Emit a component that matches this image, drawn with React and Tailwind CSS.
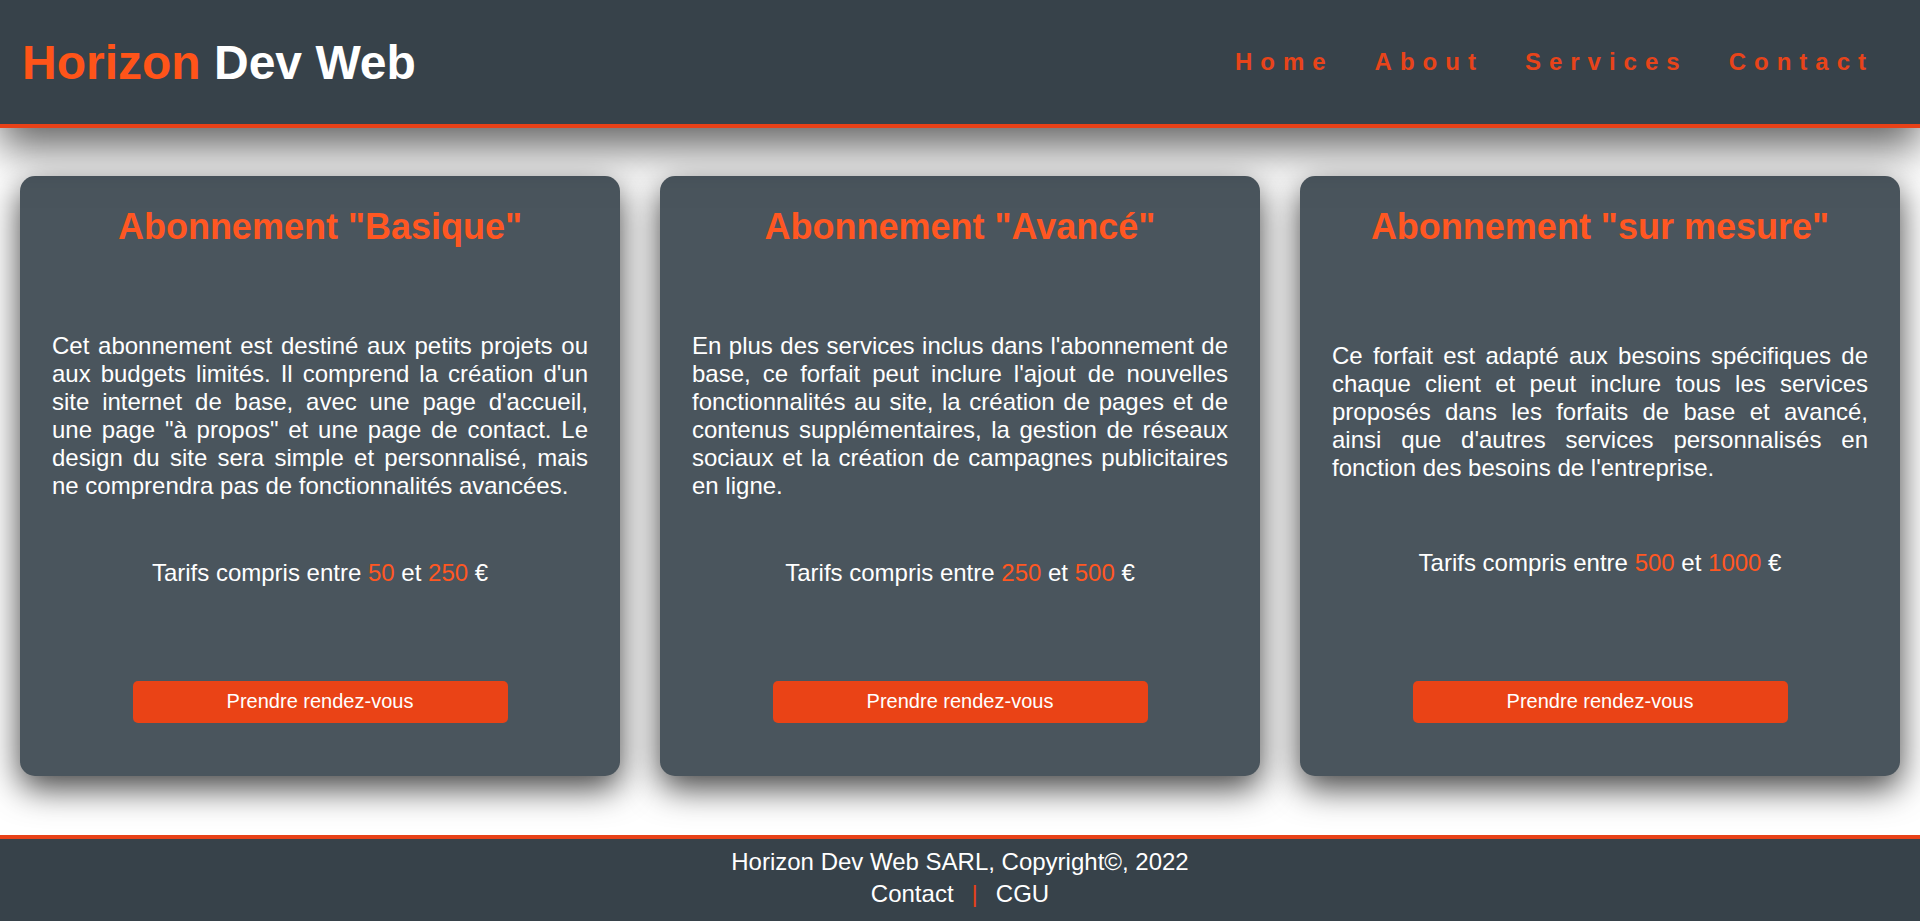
const offers = [
  {
    title: 'Abonnement "Basique"',
    text: "Cet abonnement est destiné aux petits projets ou aux budgets limités. Il comprend la création d'un site internet de base, avec une page d'accueil, une page \"à propos\" et une page de contact. Le design du site sera simple et personnalisé, mais ne comprendra pas de fonctionnalités avancées.",
    min: '50',
    max: '250',
  },
  {
    title: 'Abonnement "Avancé"',
    text: "En plus des services inclus dans l'abonnement de base, ce forfait peut inclure l'ajout de nouvelles fonctionnalités au site, la création de pages et de contenus supplémentaires, la gestion de réseaux sociaux et la création de campagnes publicitaires en ligne.",
    min: '250',
    max: '500',
  },
  {
    title: 'Abonnement "sur mesure"',
    text: "Ce forfait est adapté aux besoins spécifiques de chaque client et peut inclure tous les services proposés dans les forfaits de base et avancé, ainsi que d'autres services personnalisés en fonction des besoins de l'entreprise.",
    min: '500',
    max: '1000',
  },
];

const links = ['Home', 'About', 'Services', 'Contact'];

const OfferCard = ({ title, text, min, max }) => (
  <div className="flex h-[600px] w-[600px] flex-col justify-between rounded-[15px] bg-[#4a555d] px-[32px] pb-[53px] pt-[30px] text-white shadow-[0_12px_34px_rgba(0,0,0,0.75)]">
    <h2 className="mb-[26px] text-center text-[36px] font-bold leading-[normal] text-[#ff5722]">
      {title}
    </h2>
    <p className="text-justify text-[24px] leading-[normal]">{text}</p>
    <p className="mb-[36px] text-center text-[24px] leading-[normal]">
      Tarifs compris entre <span className="text-[#ff5722]">{min}</span> et{' '}
      <span className="text-[#ff5722]">{max}</span> €
    </p>
    <button className="mx-auto h-[42px] w-[375px] rounded-[5px] bg-[#ea4316] text-[20px] leading-[normal] text-white">
      Prendre rendez-vous
    </button>
  </div>
);

export default function App() {
  return (
    <div className="min-h-screen bg-white font-['Liberation_Sans',Arial,sans-serif]">
      {/* header */}
      <header className="relative z-10 flex h-[128px] items-center justify-between border-b-4 border-[#e84118] bg-[#37424a] pl-[22px] pr-[46px] shadow-[0_20px_40px_rgba(0,0,0,0.6)]">
        <h1 className="text-[48px] font-bold leading-[normal]">
          <span className="text-[#ff5419]">Horizon</span>{' '}
          <span className="text-white">Dev Web</span>
        </h1>
        <nav className="flex gap-[41px]">
          {links.map((l) => (
            <a key={l} href="#" className="text-[24px] font-bold leading-[normal] tracking-[8px] text-[#e8441a]">
              {l}
            </a>
          ))}
        </nav>
      </header>

      <main className="flex gap-[40px] px-[20px] pb-[59px] pt-[48px]">
        {offers.map((o) => (
          <OfferCard key={o.title} {...o} />
        ))}
      </main>

      <footer className="border-t-4 border-[#e84118] bg-[#37424a] pb-[13px] pt-[9px] text-center text-[24px] leading-[normal] text-white">
        <p>Horizon Dev Web SARL, Copyright©, 2022</p>
        <div className="mt-[4px] flex items-center justify-center gap-[18px]">
          <a href="#">Contact</a>
          <span className="text-[#e84118]">|</span>
          <a href="#">CGU</a>
        </div>
      </footer>
    </div>
  );
}
